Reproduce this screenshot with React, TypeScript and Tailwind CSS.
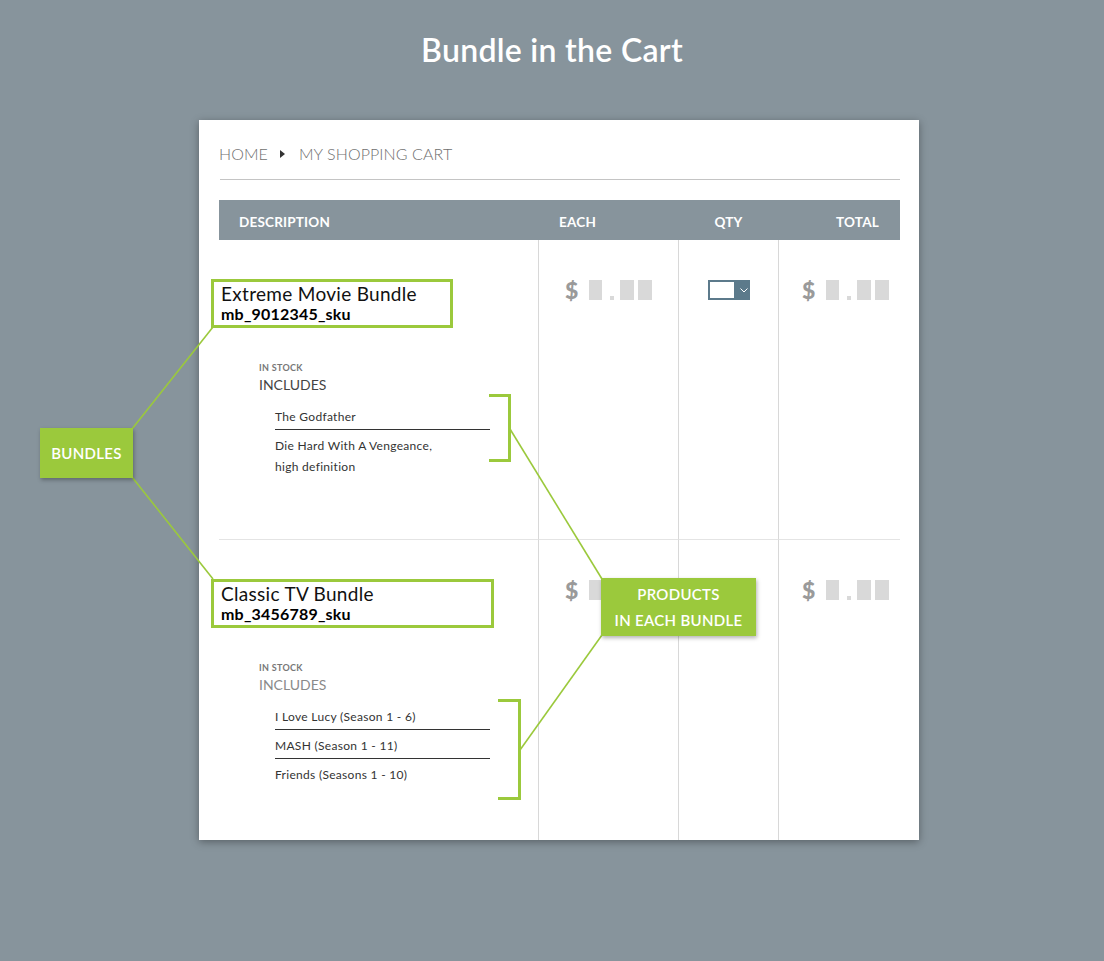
import React from "react";

const ROWS = [
  {
    name: "Extreme Movie Bundle",
    sku: "mb_9012345_sku",
    boxWidth: "w-[242px]",
    includesColor: "text-[#444]",
    items: ["The Godfather", "Die Hard With A Vengeance,\nhigh definition"],
    showQty: true,
  },
  {
    name: "Classic TV Bundle",
    sku: "mb_3456789_sku",
    boxWidth: "w-[283px]",
    includesColor: "text-[#8a8a8a]",
    items: ["I Love Lucy (Season 1 - 6)", "MASH (Season 1 - 11)", "Friends (Seasons 1 - 10)"],
    showQty: false,
  },
];

const Price = () => (
  <div className="flex h-5 items-end">
    <span className="w-[16px] text-[23px] font-black leading-5 text-[#9a9a9a]">$</span>
    <span className="ml-[8px] h-5 w-[13px] bg-[#d9d9d9]" />
    <span className="ml-[8px] h-1 w-1 bg-[#d9d9d9]" />
    <span className="ml-[6px] h-5 w-[14px] bg-[#d9d9d9]" />
    <span className="ml-[4px] h-5 w-[14px] bg-[#d9d9d9]" />
  </div>
);

const QtySelect = () => (
  <div className="flex h-5 w-[42px] items-center bg-[#5c7a8b] p-[2px]">
    <div className="h-4 w-6 bg-white" />
    <svg className="ml-[6px]" width="8" height="5" viewBox="0 0 8 5" fill="none">
      <path d="M0.5 0.5 L4 4 L7.5 0.5" stroke="white" strokeWidth="1" />
    </svg>
  </div>
);

export default function App() {
  return (
    <div className="relative h-[961px] w-[1104px] overflow-hidden bg-[#87949c] font-['Lato',sans-serif]">
      <h1 className="pt-[30px] text-center text-[32px] font-semibold leading-10 tracking-[0.3px] text-white">
        Bundle in the Cart
      </h1>

      {/* cart card */}
      <div className="ml-[199px] mt-[50px] h-[720px] w-[720px] bg-white pl-5 pr-[19px] pt-[24px] shadow-[0_2px_8px_rgba(0,0,0,0.35)]">
        <div className="flex h-5 items-center text-[16px] font-light tracking-[0.1px] text-[#6f6f6f]">
          <span>HOME</span>
          <svg className="ml-[12px] mr-[14px]" width="5" height="8" viewBox="0 0 5 8">
            <path d="M0 0 L5 4 L0 8 Z" fill="#333" />
          </svg>
          <span>MY SHOPPING CART</span>
        </div>
        <div className="ml-px mt-[15px] border-t border-[#c4c4c4]" />

        <div className="mt-5 grid h-10 grid-cols-[319px_140px_100px_122px] items-center bg-[#87949c] pt-[4px] text-[13.5px] font-bold tracking-[0.2px] text-white">
          <span className="pl-5">DESCRIPTION</span>
          <span className="pl-[21px]">EACH</span>
          <span className="pl-px text-center">QTY</span>
          <span className="pr-[21px] text-right">TOTAL</span>
        </div>

        {ROWS.map((row, i) => {
          const rowBorder = i === 0 ? "border-b border-b-[#e4e4e4]" : "";
          return (
            <div key={row.sku} className="grid h-[300px] grid-cols-[319px_140px_100px_122px]">
              <div className={`pl-[2px] pt-[39px] ${rowBorder}`}>
                <div className={`-ml-[10px] h-[49px] ${row.boxWidth} border-[3px] border-[#9bc93c] pl-[7px] pt-px`}>
                  <div className="text-[19px] leading-[22px] tracking-[0.3px] text-[#111]">{row.name}</div>
                  <div className="text-[16px] font-bold leading-[18px] tracking-[0.2px] text-black">{row.sku}</div>
                </div>
                <div className="ml-[38px] mt-[34px] text-[9px] font-bold leading-3 tracking-[0.3px] text-[#777]">
                  IN STOCK
                </div>
                <div className={`ml-[38px] mt-[2px] text-[14px] leading-[18px] ${row.includesColor}`}>
                  INCLUDES
                </div>
                <ul className="ml-[54px] mt-[7px] w-[215px] text-[12px] tracking-[0.3px] text-[#333]">
                  {row.items.map((item, j) => (
                    <li
                      key={item}
                      className={`whitespace-pre-line pb-[2px] pt-[5px] leading-[21px] ${
                        j < row.items.length - 1 ? "border-b border-[#333]" : ""
                      }`}
                    >
                      {item}
                    </li>
                  ))}
                </ul>
              </div>
              <div className={`border-l border-l-[#d8d8d8] pl-[26px] pt-10 ${rowBorder}`}>
                <Price />
              </div>
              <div className={`flex justify-center border-l border-l-[#d8d8d8] pt-10 ${rowBorder}`}>
                {row.showQty && <QtySelect />}
              </div>
              <div className={`border-l border-l-[#d8d8d8] pl-[23px] pt-10 ${rowBorder}`}>
                <Price />
              </div>
            </div>
          );
        })}
      </div>

      {/* annotation lines and brackets */}
      <svg className="pointer-events-none absolute inset-0" width="1104" height="961" viewBox="0 0 1104 961" fill="none">
        <g stroke="#9bc93c" strokeWidth="1.6">
          <line x1="132" y1="429" x2="213" y2="327" />
          <line x1="132" y1="477" x2="213" y2="579" />
          <line x1="510" y1="429" x2="602" y2="579" />
          <line x1="602" y1="635" x2="520" y2="750" />
        </g>
        <g stroke="#9bc93c" strokeWidth="3">
          <path d="M489 395.5 H509.5 V460.5 H489" />
          <path d="M498 700.5 H519.5 V798.5 H498" />
        </g>
      </svg>

      <div className="absolute left-[40px] top-[428px] flex h-[50px] w-[93px] items-center justify-center bg-[#9bc93c] text-[15px] font-semibold tracking-[0.3px] text-white shadow-[1px_2px_4px_rgba(0,0,0,0.3)]">
        BUNDLES
      </div>
      <div className="absolute left-[601px] top-[578px] flex h-[58px] w-[155px] flex-col items-center justify-center bg-[#9bc93c] text-[15px] font-semibold leading-[26px] tracking-[0.3px] text-white shadow-[1px_2px_4px_rgba(0,0,0,0.3)]">
        <span>PRODUCTS</span>
        <span>IN EACH BUNDLE</span>
      </div>
    </div>
  );
}
